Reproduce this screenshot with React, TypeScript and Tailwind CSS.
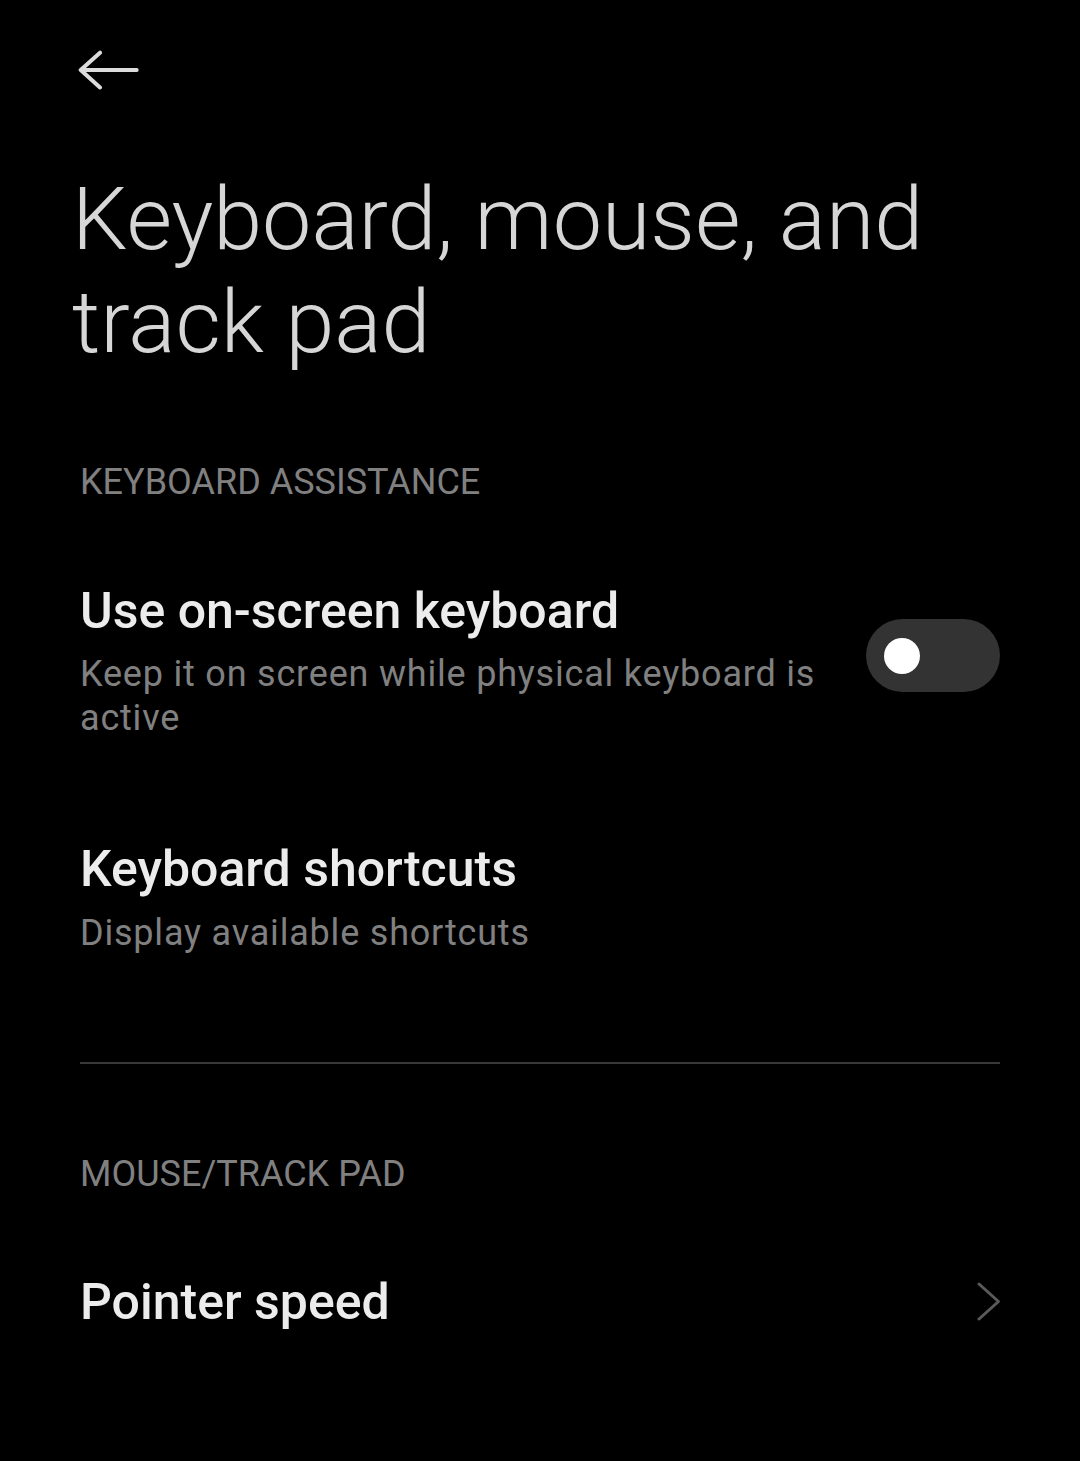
export default function App() {
  return (
    <div
      className="min-h-[1461px] w-full bg-black"
      style={{ fontFamily: "Roboto, 'Noto Sans', sans-serif" }}
    >
      <div className="px-[80px]">
        {/* header */}
        <div className="pt-[50px]">
          <svg width="62" height="40" viewBox="0 0 62 40" className="-ml-[2px] block">
            <path
              d="M2.7 20 H58.7 M22 2.7 L2.7 20 L22 37.5"
              fill="none"
              stroke="#dcdcdc"
              strokeWidth="4"
              strokeLinecap="round"
              strokeLinejoin="round"
            />
          </svg>
        </div>

        <h1 className="-ml-[8px] mt-[77px] text-[88px] font-light leading-[103px] text-[#d6d6d6]">
          Keyboard, mouse, and
          <br />
          track pad
        </h1>

        <div className="mt-[89px] text-[36px] leading-[40px] text-[#808080]">KEYBOARD ASSISTANCE</div>

        <div className="mt-[81px] flex items-center gap-[40px]">
          <div className="flex-1">
            <div className="text-[50px] font-medium leading-[56px] text-[#ececec]">Use on-screen keyboard</div>
            <div className="mt-[13px] text-[36px] leading-[44px] tracking-[0.8px] text-[#808080]">
              Keep it on screen while physical keyboard is active
            </div>
          </div>
          <div className="mb-[12px] flex h-[73px] w-[134px] shrink-0 items-center rounded-full bg-[#333333] pl-[18px]">
            <div className="h-[36px] w-[36px] rounded-full bg-white" />
          </div>
        </div>

        <div className="mt-[101px]">
          <div className="text-[50px] font-medium leading-[56px] text-[#ececec]">Keyboard shortcuts</div>
          <div className="mt-[14px] text-[36px] leading-[44px] tracking-[0.8px] text-[#808080]">
            Display available shortcuts
          </div>
        </div>

        <div className="mt-[107px] h-[2px] w-full bg-[#383838]" />

        <div className="mt-[90px] text-[36px] leading-[40px] text-[#808080]">MOUSE/TRACK PAD</div>

        <div className="mt-[80px] flex items-center justify-between">
          <div className="text-[50px] font-medium leading-[56px] text-[#ececec]">Pointer speed</div>
          <svg width="26" height="42" viewBox="0 0 26 42" className="-mr-[2px] block">
            <path
              d="M3 3 L22.5 20.5 L3 38"
              fill="none"
              stroke="#5a5a5a"
              strokeWidth="3"
              strokeLinecap="round"
              strokeLinejoin="round"
            />
          </svg>
        </div>
      </div>
    </div>
  );
}
